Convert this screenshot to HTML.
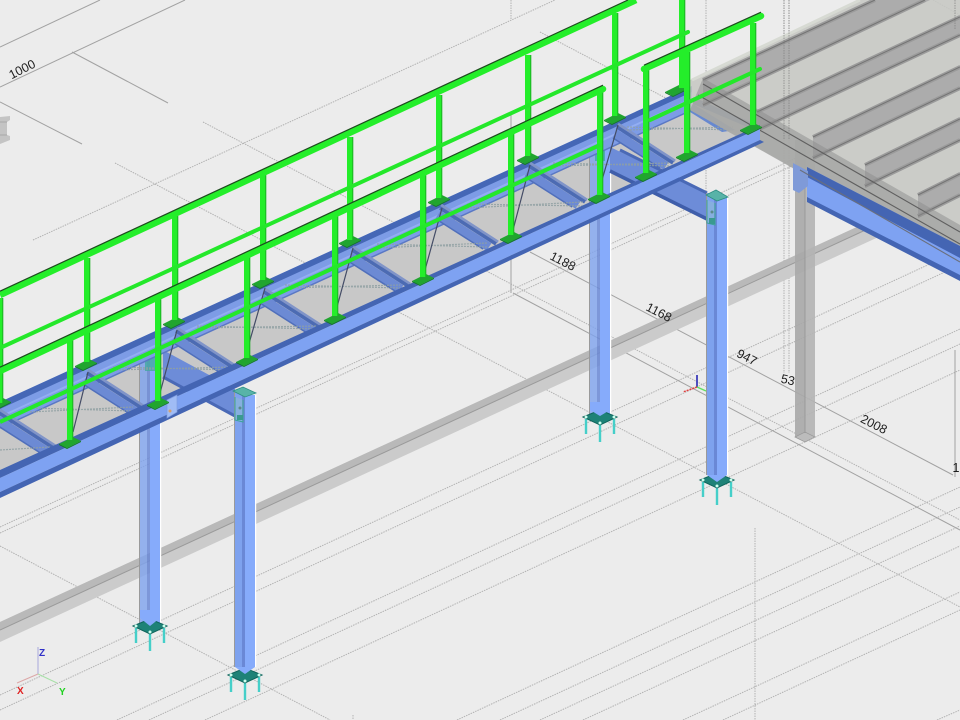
<!DOCTYPE html>
<html><head><meta charset="utf-8"><title>Stair model</title>
<style>html,body{margin:0;padding:0;background:#ececec;overflow:hidden;width:960px;height:720px}svg{display:block}text{font-family:"Liberation Sans",sans-serif}</style></head>
<body>
<svg width="960" height="720" viewBox="0 0 960 720" xmlns="http://www.w3.org/2000/svg">
<defs>
<g id="bar">
<line x1="0" y1="0" x2="57" y2="37" stroke="#8094c8" stroke-width="3"/>
<line x1="-1" y1="3" x2="55" y2="39" stroke="#4c6bb3" stroke-width="3.5"/>
<line x1="-3" y1="9.5" x2="48" y2="42" stroke="#6c8ad4" stroke-width="9"/>
<line x1="-5" y1="14" x2="42" y2="44" stroke="#506fbb" stroke-width="1.5"/>
</g>
<g id="plate"><polygon points="-11,2 3,-5 11,-1 -3,6" fill="#21a52f"/><polygon points="-11,2 -3,6 11,-1 11,0 -3,7 -11,3" fill="#137a20"/></g>
<g id="base">
<path d="M-14 2V17M0 6V25M14 2V17" stroke="#45cfc9" stroke-width="2.4" fill="none"/>
<polygon points="-17,0 0,-7 17,0 0,8" fill="#1e8277" stroke="#0f655c" stroke-width="1"/>
<circle cx="-14" cy="0" r="1.5" fill="#cfe"/><circle cx="14" cy="0" r="1.5" fill="#cfe"/><circle cx="0" cy="6" r="1.5" fill="#cfe"/>
</g>
</defs>
<rect width="960" height="720" fill="#ececec"/>

<!-- dotted grid -->
<g stroke="#b2b2b2" stroke-width="1" stroke-dasharray="1.5 1" fill="none">
<path d="M33 240L555 0M0 527L960 82M0 533L960 88M0 695L960 250M0 710L960 265M117 720L960 329M149 720L960 344M205 720L960 370M457 720L960 487M500 720L960 507M540 720L960 526M583 720L960 546M683 720L960 592M723 720L960 610M937 720L960 710"/>
<path d="M115 163L960 607M203 122L960 520M0 546L330 720M540 32L700 116M933 0L960 15"/>
<path d="M511 0V20M706 0V195M784 0V373M789 0V373M755 528V720M353 715V720M955 0V30"/>
</g>
<!-- solid dims -->
<g stroke="#a2a2a2" stroke-width="1" fill="none">
<path d="M0 47L100 0M0 87L185 0M72 52L168 103M0 102L82 144"/>
<path d="M530 252L953 475M513 293L960 530M511 113V293M955 350V477"/>
</g>

<!-- ghost I beam top left -->
<polygon points="0,117 10,116 10,120 7,122 7,135 10,136 10,140 0,144" fill="#c4c4c4"/>
<path d="M0 122H7M0 135H7" stroke="#a9a9a9" stroke-width="1"/>

<!-- ghost long beam -->
<polygon points="0,622 885,214 885,234 0,642" fill="#cbcbcb"/>
<polygon points="0,622 885,214 885,221 0,630" fill="#b9b9b9"/>
<line x1="0" y1="630" x2="885" y2="221" stroke="#9a9a9a" stroke-width="1"/>

<!-- axis triad -->
<g fill="none" stroke-width="1">
<line x1="38" y1="674" x2="38" y2="647" stroke="#a7a7dc"/>
<line x1="38" y1="674" x2="17" y2="683" stroke="#dca7a7"/>
<line x1="38" y1="674" x2="57" y2="683" stroke="#a7e0a7"/>
</g>
<g font-size="10" font-weight="bold">
<text x="39" y="656" fill="#3030c8">Z</text><text x="17" y="694" fill="#e02020">X</text><text x="59" y="695" fill="#20d020">Y</text>
</g>
<!-- small triad -->
<line x1="697" y1="387" x2="697" y2="375" stroke="#1a1ab0" stroke-width="1.5"/>
<line x1="697" y1="387" x2="683" y2="392" stroke="#e04040" stroke-width="1.5" stroke-dasharray="2 1"/>
<line x1="697" y1="387" x2="706" y2="391" stroke="#60e060" stroke-width="1.5"/>

<!-- stair floor -->
<polygon points="0,425 692,105 760,130 0,480" fill="#c8c8c8"/>

<!-- rear columns -->
<rect x="139" y="355" width="1" height="270" fill="#9a9a9a"/>
<rect x="140" y="355" width="7" height="270" fill="#7ea2ee" fill-opacity=".8"/><rect x="147" y="355" width="3" height="270" fill="#6a88d6" fill-opacity=".85"/><rect x="150" y="355" width="10" height="270" fill="#86abfb"/><rect x="160" y="355" width="1.2" height="270" fill="#fff"/>
<rect x="589" y="145" width="1" height="270" fill="#9a9a9a"/>
<rect x="590" y="145" width="7" height="270" fill="#7ea2ee" fill-opacity=".8"/><rect x="597" y="145" width="3" height="270" fill="#6a88d6" fill-opacity=".85"/><rect x="600" y="145" width="10" height="270" fill="#86abfb"/><rect x="610" y="145" width="1.2" height="270" fill="#fff"/>
<path d="M145 357h10v14h-10zM595 147h10v14h-10z" fill="#45a8a0" opacity=".8"/>
<use href="#base" x="150" y="626"/>
<use href="#base" x="600" y="417"/>
<polygon points="140,618 150,626 160,618 160,610 140,610" fill="#86abfb"/>
<polygon points="590,410 600,416 610,410 610,402 590,402" fill="#86abfb"/>

<!-- support beams -->
<polygon points="163,350 235,389 235,417 163,378" fill="#6d8cd8"/>
<line x1="163" y1="377" x2="235" y2="416" stroke="#4a69b6" stroke-width="3"/>
<polygon points="610,147 707,193 707,220 610,172" fill="#6d8cd8"/>
<line x1="610" y1="171" x2="707" y2="219" stroke="#3f5eaa" stroke-width="3.5"/>
<line x1="620" y1="150" x2="707" y2="193" stroke="#4a69b6" stroke-width="3"/>

<!-- rear stringer -->
<polygon points="0,402 692,86 692,110 0,428" fill="#7d9ce6"/>
<polygon points="0,402 692,86 692,92 0,409" fill="#4567b6"/>
<line x1="0" y1="417" x2="692" y2="99" stroke="#93aef2" stroke-width="2"/>
<line x1="0" y1="428" x2="692" y2="110" stroke="#5a78c4" stroke-width="1.5"/>

<!-- cross bars -->
<use href="#bar" x="0" y="410"/>
<use href="#bar" x="88" y="370"/>
<use href="#bar" x="177" y="328"/>
<use href="#bar" x="265" y="289"/>
<use href="#bar" x="353" y="247"/>
<use href="#bar" x="441" y="205"/>
<use href="#bar" x="530" y="163"/>
<use href="#bar" x="618" y="124"/>
<polygon points="693,97 757,125 757,131 693,104" fill="#4a6ab5"/>
<polygon points="693,104 735,130 722,132 690,112" fill="#6688d0"/>

<!-- straps -->
<g stroke="#8fa0a2" stroke-width="1.2" stroke-dasharray="2 1" fill="none" opacity=".85">
<path d="M0 450L50 447M30 412L133 407M30 408L133 411M113 370L233 367M113 367L233 370M197 328L317 326M197 326L317 329M285 288L400 285M285 285L400 288M377 248L487 243M377 244L487 247M467 208L583 202M467 204L583 206M553 166L670 163M553 163L670 166M627 127L733 130M627 130L733 127"/>
</g>
<!-- ties -->
<g stroke="#444c66" stroke-width="1.2" fill="none">
<path d="M88 372L73 432M177 330L160 393M265 288L248 347M353 248L337 307M442 208L425 270M530 165L513 230M618 125L602 180"/>
</g>

<!-- ghost column -->
<rect x="795" y="140" width="10" height="297" fill="#a8a8a8" opacity=".9"/>
<rect x="805" y="140" width="10" height="297" fill="#b4b4b4" opacity=".9"/>
<polygon points="795,437 805,442 815,437 805,432" fill="#bcbcbc" stroke="#999" stroke-width=".7"/>
<line x1="805" y1="140" x2="805" y2="433" stroke="#959595" stroke-width=".8"/>

<!-- slab -->
<polygon points="690,80 860,0 960,0 960,262 690,110" fill="#c6c7c3" fill-opacity=".88"/>
<line x1="692" y1="80" x2="860" y2="0" stroke="#d7dad3" stroke-width="3"/>
<!-- slab beams -->
<g fill="#acacac">
<polygon points="703,78 870,0 930,0 703,107"/>
<polygon points="757,110 960,15 960,37 757,132"/>
<polygon points="813,135 960,65 960,90 813,160"/>
<polygon points="865,163 960,117 960,142 865,188"/>
<polygon points="918,193 960,172 960,197 918,218"/>
</g>
<g stroke="#9b9b9b" stroke-width="4" fill="none">
<path d="M703 80L875 0M703 105L925 0M757 112L960 17M757 130L960 35M813 137L960 67M813 158L960 88M865 165L960 119M865 186L960 140M918 195L960 174M918 216L960 195"/>
</g>
<g stroke="#737373" stroke-width="1" fill="none">
<path d="M703 80L875 0M703 105L925 0M757 112L960 17M757 130L960 35M813 137L960 67M813 158L960 88M865 165L960 119M865 186L960 140M918 195L960 174M918 216L960 195"/>
</g>
<!-- ghost stringer -->
<polygon points="703,78 960,225 960,263 690,110" fill="#8c8c8c" fill-opacity=".5"/>
<g stroke="#5f5f5f" stroke-width="1.1" fill="none">
<path d="M703 84L960 232M698 95L960 244"/>
</g>
<g stroke="#777" stroke-dasharray="1.5 1" fill="none" opacity=".6"><path d="M784 0V140M789 0V140M955 0V30"/></g>

<!-- right blue beam (over ghost) -->
<polygon points="807,167 960,246 960,280 807,200" fill="#7ea2f2"/>
<polygon points="807,167 960,246 960,258 807,177" fill="#4465b3"/>
<polygon points="807,197 960,275 960,281 807,202" fill="#4465b3"/>
<polygon points="793,163 808,171 808,186 799,193 793,190" fill="#7f9ad8"/>
<line x1="800" y1="170" x2="960" y2="262" stroke="#6a6f7d" stroke-width="1.1"/>

<!-- front columns -->
<use href="#base" x="245" y="675"/>
<rect x="234" y="392" width="1" height="275" fill="#9a9a9a"/>
<rect x="235" y="392" width="7" height="275" fill="#7ea2ee"/><rect x="242" y="392" width="3" height="275" fill="#6a88d6"/><rect x="245" y="395" width="10" height="272" fill="#86abfb"/><rect x="255" y="395" width="1.2" height="272" fill="#fff"/>
<polygon points="235,667 245,674 255,667" fill="#86abfb"/>
<polygon points="233,391 243,387 256,393 245,397" fill="#58b3a8" stroke="#2e8e84" stroke-width=".8"/>
<path d="M235 397V420L243 422V400" fill="#93c3c9" fill-opacity=".4" stroke="#3aa398" stroke-width="1"/>
<rect x="237" y="415" width="6" height="5" fill="#3a9a90"/><circle cx="240" cy="408" r="1.5" fill="#5a8a8a"/>

<use href="#base" x="717" y="480"/>
<rect x="706" y="193" width="1" height="282" fill="#9a9a9a"/>
<rect x="707" y="193" width="7" height="282" fill="#7ea2ee"/><rect x="714" y="193" width="3" height="282" fill="#6a88d6"/><rect x="717" y="196" width="10" height="279" fill="#86abfb"/><rect x="727" y="196" width="1.2" height="279" fill="#fff"/>
<polygon points="707,475 717,482 727,475" fill="#86abfb"/>
<polygon points="706,195 716,190 728,197 717,201" fill="#58b3a8" stroke="#2e8e84" stroke-width=".8"/>
<path d="M707 200V223L715 225V203" fill="#93c3c9" fill-opacity=".4" stroke="#3aa398" stroke-width="1"/>
<rect x="709" y="218" width="6" height="6" fill="#3a9a90"/><circle cx="712" cy="212" r="1.5" fill="#5a8a8a"/>

<!-- front stringer -->
<polygon points="0,470 760,125 760,128 0,478" fill="#4465b3"/>
<polygon points="0,478 760,128 760,140 0,492" fill="#7ea2f2"/>
<polygon points="0,492 760,140 764,142 0,498" fill="#4465b3"/>
<polygon points="167,400 177,395 177,412 167,418" fill="#a0bcf5" stroke="#7f9de0" stroke-width=".7"/>
<circle cx="170" cy="411" r="1.5" fill="#d4a070"/>

<!-- far railing -->
<g>
<use href="#plate" x="0" y="403"/><use href="#plate" x="86" y="364"/><use href="#plate" x="174" y="322"/><use href="#plate" x="263" y="282"/><use href="#plate" x="350" y="241"/><use href="#plate" x="439" y="200"/><use href="#plate" x="528" y="158"/><use href="#plate" x="615" y="118"/><use href="#plate" x="676" y="90"/>
<path d="M0 298V403M87 258V362M175 216V320M263 175V280M350 137V240M439 95V198M528 55V156M615 13V116M682 0V88" stroke="#24ee2a" stroke-width="6" fill="none"/>
<path d="M2.8 298V403M89.8 258V362M177.8 216V320M265.8 175V280M352.8 137V240M441.8 95V198M530.8 55V156M617.8 13V116M684.8 0V88" stroke="#19b020" stroke-width="1" fill="none"/>
<line x1="0" y1="348" x2="688" y2="32" stroke="#24e82a" stroke-width="4" stroke-linecap="round"/>
<line x1="0" y1="295" x2="636" y2="0" stroke="#24ee2a" stroke-width="6.5"/>
<line x1="0" y1="291.2" x2="628" y2="0" stroke="#1d4a1d" stroke-width="1.2"/>
</g>

<!-- near railing -->
<g>
<use href="#plate" x="70" y="442"/><use href="#plate" x="158" y="403"/><use href="#plate" x="247" y="360"/><use href="#plate" x="335" y="318"/><use href="#plate" x="423" y="279"/><use href="#plate" x="511" y="237"/><use href="#plate" x="599" y="197"/>
<path d="M70 337V440M158 297V401M247 255V358M335 215V316M423 174V277M511 133V235M600 89V195" stroke="#24ee2a" stroke-width="6" fill="none"/>
<path d="M72.8 337V440M160.8 297V401M249.8 255V358M337.8 215V316M425.8 174V277M513.8 133V235M602.8 89V195" stroke="#19b020" stroke-width="1" fill="none"/>
<line x1="0" y1="422" x2="600" y2="145" stroke="#24e82a" stroke-width="4"/>
<line x1="0" y1="371" x2="603" y2="89" stroke="#24ee2a" stroke-width="6.5" stroke-linecap="round"/>
<line x1="0" y1="367.2" x2="603" y2="85.2" stroke="#1d4a1d" stroke-width="1.2"/>
</g>

<!-- landing railing -->
<g>
<use href="#plate" x="646" y="175"/><use href="#plate" x="687" y="155"/><use href="#plate" x="751" y="128"/>
<path d="M646 70V173M687 52V153M753 23V125" stroke="#24ee2a" stroke-width="6" fill="none"/>
<path d="M648.8 70V173M689.8 52V153M755.8 23V125" stroke="#19b020" stroke-width="1" fill="none"/>
<line x1="650" y1="120" x2="760" y2="69" stroke="#24e82a" stroke-width="4" stroke-linecap="round"/>
<line x1="644" y1="69" x2="761" y2="16" stroke="#24ee2a" stroke-width="6.5" stroke-linecap="round"/>
<line x1="644" y1="65.2" x2="761" y2="12.2" stroke="#1d4a1d" stroke-width="1.2"/>
</g>

<!-- dimension text -->
<g fill="#1e1e1e" font-size="12.5">
<text transform="translate(24,73) rotate(-27)" text-anchor="middle">1000</text>
<text transform="translate(561,265) rotate(27)" text-anchor="middle">1188</text>
<text transform="translate(657,316) rotate(27)" text-anchor="middle">1168</text>
<text transform="translate(745,361) rotate(27)" text-anchor="middle">947</text>
<text transform="translate(787,384) rotate(12)" text-anchor="middle">53</text>
<text transform="translate(872,428) rotate(27)" text-anchor="middle">2008</text>
<text transform="translate(956,472)" text-anchor="middle">1</text>
</g>
</svg>
</body></html>
